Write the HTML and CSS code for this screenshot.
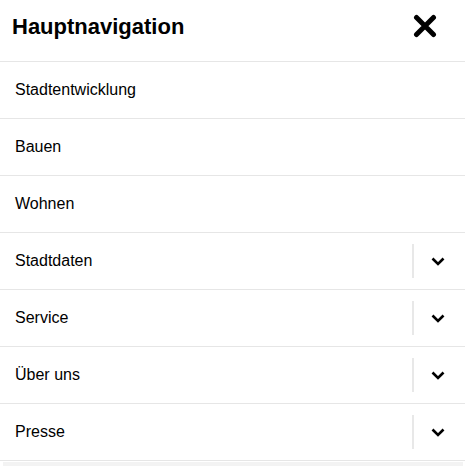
FILE: index.html
```html
<!DOCTYPE html>
<html lang="de">
<head>
    <meta charset="UTF-8">
    <meta name="viewport" content="width=device-width, initial-scale=1.0">
    <title>Hauptnavigation</title>
    <link rel="stylesheet" href="styles.css">
</head>
<body>
    <nav class="menu">
        <div class="menu-header">
            <h2>Hauptnavigation</h2>
            <button class="close" aria-label="Schließen">
                <svg width="24" height="24" viewBox="0 0 24 24">
                    <path d="M3.5 3.5 L20.5 20.5 M20.5 3.5 L3.5 20.5" stroke="#000" stroke-width="5" stroke-linecap="round"/>
                </svg>
            </button>
        </div>
        <ul class="menu-list">
            <li class="item"><a href="#">Stadtentwicklung</a></li>
            <li class="item"><a href="#">Bauen</a></li>
            <li class="item"><a href="#">Wohnen</a></li>
            <li class="item"><a href="#">Stadtdaten</a><span class="toggle"><svg width="14" height="9" viewBox="0 0 14 9"><path d="M1.5 1.5 L7 7 L12.5 1.5" fill="none" stroke="#000" stroke-width="2.6"/></svg></span></li>
            <li class="item"><a href="#">Service</a><span class="toggle"><svg width="14" height="9" viewBox="0 0 14 9"><path d="M1.5 1.5 L7 7 L12.5 1.5" fill="none" stroke="#000" stroke-width="2.6"/></svg></span></li>
            <li class="item"><a href="#">Über uns</a><span class="toggle"><svg width="14" height="9" viewBox="0 0 14 9"><path d="M1.5 1.5 L7 7 L12.5 1.5" fill="none" stroke="#000" stroke-width="2.6"/></svg></span></li>
            <li class="item"><a href="#">Presse</a><span class="toggle"><svg width="14" height="9" viewBox="0 0 14 9"><path d="M1.5 1.5 L7 7 L12.5 1.5" fill="none" stroke="#000" stroke-width="2.6"/></svg></span></li>
        </ul>
        <div class="menu-foot"></div>
    </nav>
</body>
</html>
```

FILE: styles.css
```css
body {
    margin: 0;
    font-family: "Liberation Sans", Arial, sans-serif;
    background: #fff;
    color: #000;
}

.menu {
    width: 465px;
}

.menu-header {
    display: flex;
    align-items: center;
    justify-content: space-between;
    height: 61px;
    padding: 0 28px 0 12px;
    border-bottom: 1px solid #e6e6e6;
    box-sizing: content-box;
}

.menu-header h2 {
    margin: 0 0 8px;
    font-size: 22px;
    font-weight: bold;
}

.close {
    border: 0;
    background: none;
    padding: 0;
    margin-bottom: 9px;
    display: flex;
}

.menu-list {
    list-style: none;
    margin: 0;
    padding: 0;
}

.item {
    display: flex;
    align-items: center;
    height: 56px;
    border-bottom: 1px solid #e6e6e6;
}

.item a {
    flex: 1;
    padding-left: 15px;
    font-size: 16px;
    color: #000;
    text-decoration: none;
}

.toggle {
    display: flex;
    align-items: center;
    justify-content: center;
    width: 48px;
    height: 34px;
    margin-right: 3px;
    border-left: 2px solid #e8e8e8;
}

.menu-foot {
    height: 4px;
    margin: 1px 2px 0 3px;
    background: #f3f3f3;
}
```
